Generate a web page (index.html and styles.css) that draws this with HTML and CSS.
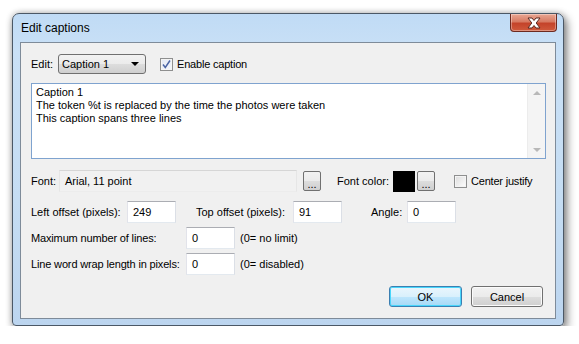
FILE: index.html
```html
<!DOCTYPE html>
<html lang="en">
<head>
<meta charset="UTF-8">
<title>Edit captions</title>
<link rel="stylesheet" href="styles.css">
</head>
<body>
<!-- Dialog window -->
<div class="window">
  <div class="titlebar">
    <div class="title">Edit captions</div>
    <div class="close-btn">
      <svg width="16" height="12" viewBox="0 0 16 12">
        <path d="M2 1 H6 L8 3.5 L10 1 H14 L10.2 6 L14 11 H10 L8 8.5 L6 11 H2 L5.8 6 Z" fill="#fff" stroke="#5a2a22" stroke-width="1" stroke-linejoin="round"/>
      </svg>
    </div>
  </div>

  <div class="client">
    <div class="row row-edit">
      <span class="lbl lbl-edit">Edit:</span>
      <div class="combo">
        <span>Caption 1</span>
        <span class="combo-arrow"></span>
      </div>
      <label class="check check-enable">
        <span class="box checked">
          <svg width="11" height="11" viewBox="0 0 11 11"><path d="M2 5.5 L4.3 8.5 L9 1.5" fill="none" stroke="#4a64a4" stroke-width="1.5"/></svg>
        </span>
        <span>Enable caption</span>
      </label>
    </div>

    <div class="memo">
      <div class="memo-text">
        <div>Caption 1</div>
        <div>The token %t is replaced by the time the photos were taken</div>
        <div>This caption spans three lines</div>
      </div>
      <div class="memo-scroll">
        <span class="arr arr-up"></span>
        <span class="arr arr-down"></span>
      </div>
    </div>

    <div class="row row-font">
      <span class="lbl lbl-font">Font:</span>
      <div class="field field-font">Arial, 11 point</div>
      <div class="dots-btn dots-font">...</div>
      <span class="lbl lbl-color">Font color:</span>
      <div class="swatch"></div>
      <div class="dots-btn dots-color">...</div>
      <label class="check check-center">
        <span class="box"></span>
        <span>Center justify</span>
      </label>
    </div>

    <div class="row row-offsets">
      <span class="lbl lbl-left">Left offset (pixels):</span>
      <div class="field num">249</div>
      <span class="lbl lbl-top">Top offset (pixels):</span>
      <div class="field num">91</div>
      <span class="lbl lbl-angle">Angle:</span>
      <div class="field num">0</div>
    </div>

    <div class="row row-small">
      <span class="lbl lbl-long">Maximum number of lines:</span>
      <div class="field num">0</div>
      <span class="hint">(0= no limit)</span>
    </div>

    <div class="row row-small">
      <span class="lbl lbl-long">Line word wrap length in pixels:</span>
      <div class="field num">0</div>
      <span class="hint">(0= disabled)</span>
    </div>

    <div class="buttons">
      <div class="btn btn-default">OK</div>
      <div class="btn">Cancel</div>
    </div>
  </div>
</div>
</body>
</html>
```

FILE: styles.css
```css
body {
margin: 0;
padding: 13px 0 0 12px;
background: #ffffff;
font-family: 'Liberation Sans', Arial, sans-serif;
font-size: 11px;
color: #000;
}

.window {
width: 550px;
height: 311px;
border: 1px solid #4b5866;
border-radius: 7px 7px 4px 4px;
background: linear-gradient(180deg, #c0dbf5 0%, #c9e0f6 12%, #c5ddf3 60%, #bcd5ef 100%);
box-shadow: 3px 4px 10px rgba(0, 0, 0, 0.45), 0 0 6px rgba(0, 0, 0, 0.25);
display: flex;
flex-direction: column;
}

.titlebar {
height: 28px;
display: flex;
align-items: flex-start;
}

.title {
padding: 7px 0 0 8px;
font-size: 12px;
line-height: 14px;
color: #000;
}

.close-btn {
margin-left: auto;
margin-right: 6px;
width: 45px;
height: 17px;
border: 1px solid #6d2a20;
border-top: none;
border-radius: 0 0 4px 4px;
background: linear-gradient(180deg, #e9a793 0%, #d77a62 45%, #c4432a 55%, #cf5a3c 100%);
display: flex;
justify-content: center;
align-items: center;
box-shadow: inset 0 0 0 1px rgba(255, 255, 255, 0.35);
}

.client {
margin: 0 7px 6px 7px;
flex: 1;
border: 1px solid #7e8b99;
background: #f0f0f0;
padding: 11px 9px 0 10px;
display: flex;
flex-direction: column;
}

.row {
display: flex;
align-items: center;
}

.lbl, .hint {
white-space: nowrap;
}

.row-edit {
height: 20px;
}

.lbl-edit {
width: 27px;
}

.combo {
width: 81px;
height: 18px;
border: 1px solid #707070;
border-radius: 3px;
background: linear-gradient(180deg, #f2f2f2 0%, #ebebeb 50%, #dddddd 51%, #cfcfcf 100%);
display: flex;
align-items: center;
padding: 0 2px 0 3px;
}

.combo-arrow {
margin-left: auto;
margin-right: 4px;
width: 0;
height: 0;
border-left: 4px solid transparent;
border-right: 4px solid transparent;
border-top: 4px solid #000;
}

.check {
display: flex;
align-items: center;
letter-spacing: -0.2px;
}

.check-enable {
margin-left: 14px;
}

.box {
width: 11px;
height: 11px;
border: 1px solid #8e8f8f;
background: linear-gradient(135deg, #dcdcdc 0%, #f4f4f4 70%, #ffffff 100%);
box-shadow: inset 0 0 0 1px #f4f4f4;
margin-right: 4px;
display: flex;
}

.box.checked {
background: linear-gradient(135deg, #e2e8f4 0%, #f4f6fb 100%);
}

.memo {
margin-top: 9px;
height: 74px;
border: 1px solid #7fa3cf;
background: #fff;
display: flex;
}

.memo-text {
flex: 1;
padding: 2px 4px;
line-height: 13px;
}

.memo-scroll {
width: 17px;
background: #f4f4f4;
border-left: 1px solid #ececec;
display: flex;
flex-direction: column;
justify-content: space-between;
align-items: center;
padding: 7px 0 6px;
}

.arr {
width: 0;
height: 0;
border-left: 4px solid transparent;
border-right: 4px solid transparent;
}

.arr-up {
border-bottom: 4px solid #b8b8b8;
}

.arr-down {
border-top: 4px solid #b8b8b8;
}

.row-font {
margin-top: 11px;
height: 22px;
}

.lbl-font {
width: 28px;
}

.field {
height: 20px;
border: 1px solid #abadb3;
border-color: #abadb3 #dbdfe6 #e3e9ef #e2e3ea;
background: #fff;
display: flex;
align-items: center;
padding: 0 5px;
box-sizing: content-box;
}

.field-font {
width: 226px;
background: #f1f1f1;
border-color: #d6d6d6 #e6e6e6 #ececec #e6e6e6;
}

.dots-btn {
width: 16px;
height: 18px;
border: 1px solid #707070;
border-radius: 2px;
background: linear-gradient(180deg, #f2f2f2 0%, #ebebeb 50%, #dddddd 51%, #cfcfcf 100%);
display: flex;
justify-content: center;
align-items: flex-end;
line-height: 12px;
font-size: 11px;
}

.dots-font {
margin-left: 6px;
}

.lbl-color {
margin-left: 16px;
width: 56px;
}

.swatch {
width: 22px;
height: 21px;
background: #000;
}

.dots-color {
margin-left: 2px;
}

.check-center {
margin-left: 19px;
}

.row-offsets {
margin-top: 9px;
height: 22px;
}

.num {
width: 37px;
}

.lbl-left {
width: 96px;
}

.lbl-top {
margin-left: 20px;
width: 97px;
}

.lbl-angle {
margin-left: 29px;
width: 36px;
}

.row-small {
margin-top: 4px;
height: 22px;
}

.lbl-long {
width: 155px;
letter-spacing: -0.15px;
}

.hint {
margin-left: 5px;
}

.buttons {
margin-top: 11px;
margin-right: 3px;
display: flex;
justify-content: flex-end;
gap: 9px;
}

.btn {
width: 70px;
height: 19px;
border: 1px solid #707070;
border-radius: 3px;
background: linear-gradient(180deg, #f2f2f2 0%, #ebebeb 50%, #dddddd 51%, #cfcfcf 100%);
box-shadow: inset 0 0 0 1px #fbfbfb;
display: flex;
justify-content: center;
align-items: center;
}

.btn-default {
width: 71px;
border-color: #3c7fb1;
background: linear-gradient(180deg, #eaf6fd 0%, #d9f0fc 50%, #bee6fd 51%, #a7d9f5 100%);
box-shadow: inset 0 0 0 1px #48d6fb;
}
```
